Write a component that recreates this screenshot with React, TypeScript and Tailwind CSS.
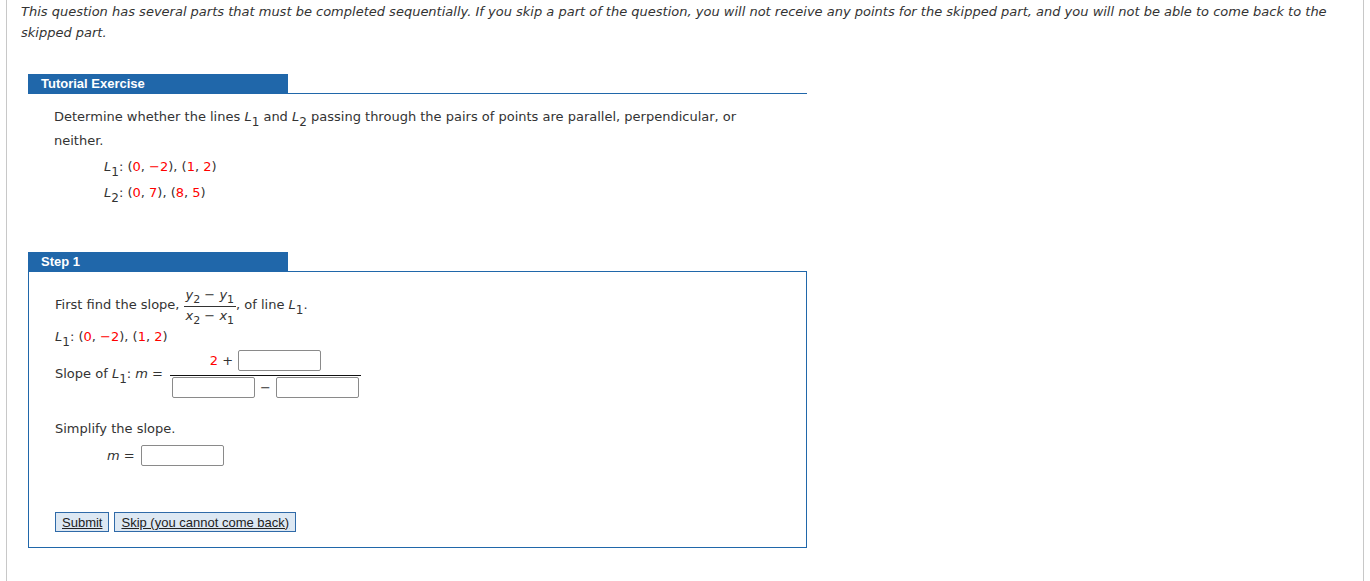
const RED = 'text-[#ff0000]';

function Sub({ children }: { children: React.ReactNode }) {
  return <span className="relative top-[5px] text-[12px]">{children}</span>;
}

function FSub({ children }: { children: React.ReactNode }) {
  return <span className="relative top-[4px] text-[11px]">{children}</span>;
}

function L({ n }: { n: number }) {
  return (
    <span>
      <i>L</i>
      <Sub>{n}</Sub>
    </span>
  );
}

function Box() {
  return <span className="inline-block h-[21px] w-[83px] rounded-[2px] border border-[#8a8a8a] bg-white" />;
}

function Pair({ a, b, c, d }: { a: string; b: string; c: string; d: string }) {
  return (
    <>
      (<span className={RED}>{a}</span>, <span className={RED}>{b}</span>), (
      <span className={RED}>{c}</span>, <span className={RED}>{d}</span>)
    </>
  );
}

function Header({ title }: { title: string }) {
  return (
    <div className="flex items-end">
      <div className="flex h-[20px] w-[260px] items-center bg-[#2067aa] pl-[13px] font-['Liberation_Sans',Arial,sans-serif] text-[13px] font-bold text-white">
        {title}
      </div>
      <div className="flex-1 border-b border-[#2067aa]" />
    </div>
  );
}

export default function App() {
  return (
    <div className="min-h-[581px] bg-white font-['DejaVu_Sans',Verdana,sans-serif] text-[13px] text-[#333]">
      <div className="mx-[6px] min-h-[581px] border-x border-[#c8c8c8] pl-[14px] pr-[16px] pt-[1px]">
        <p className="leading-[21px] italic">
          This question has several parts that must be completed sequentially. If you skip a part of the question, you will not receive any points for the skipped part, and you will not be able to come back to the skipped part.
        </p>

        <div className="ml-[7px] mt-[31px] w-[779px]">
          <Header title="Tutorial Exercise" />
          <div className="pl-[26px] pt-[11px]">
            <p className="w-[700px] leading-[24px]">
              Determine whether the lines <L n={1} /> and <L n={2} /> passing through the pairs of points are parallel, perpendicular, or neither.
            </p>
            <div className="mt-[1px] pl-[50px] leading-[25px]">
              <div>
                <L n={1} />: <Pair a="0" b="−2" c="1" d="2" />
              </div>
              <div>
                <L n={2} />: <Pair a="0" b="7" c="8" d="5" />
              </div>
            </div>
          </div>

          <div className="mt-[46px]">
            <Header title="Step 1" />
            <div className="h-[276px] border border-t-0 border-[#2067aa] pl-[26px] pt-[14px]">
              <div className="flex items-center">
                <span className="pb-[2px]">First find the slope,</span>
                <span className="ml-[4px] inline-flex flex-col items-center">
                  <span className="border-b border-[#333] px-[2px] pb-[2px] leading-[17px]">
                    <i>y</i>
                    <FSub>2</FSub> − <i>y</i>
                    <FSub>1</FSub>
                  </span>
                  <span className="px-[2px] leading-[17px]">
                    <i>x</i>
                    <FSub>2</FSub> − <i>x</i>
                    <FSub>1</FSub>
                  </span>
                </span>
                <span className="pb-[2px]">
                  , of line <L n={1} />.
                </span>
              </div>
              <div className="mt-[3px] leading-[18px]">
                <L n={1} />: <Pair a="0" b="−2" c="1" d="2" />
              </div>
              <div className="mt-[4px] flex items-center">
                <span>
                  Slope of <L n={1} />: <i>m</i> =
                </span>
                <span className="ml-[7px] inline-flex flex-col">
                  <span className="flex items-center justify-center gap-[5px] border-b border-[#111] pb-[4px]">
                    <span>
                      <span className={RED}>2</span> +
                    </span>
                    <Box />
                  </span>
                  <span className="flex items-center gap-[5px] px-[2px] pt-px">
                    <Box />
                    <span>−</span>
                    <Box />
                  </span>
                </span>
              </div>
              <div className="mt-[21px] leading-[20px]">Simplify the slope.</div>
              <div className="mt-[6px] flex items-center pl-[52px]">
                <span>
                  <i>m</i> =
                </span>
                <span className="ml-[6px] flex">
                  <Box />
                </span>
              </div>
              <div className="mt-[46px] flex gap-[5px] font-['Liberation_Sans',Arial,sans-serif] text-[13px] text-[#222]">
                <button className="h-[20px] border border-[#2f6aa8] bg-[#dde8f3] px-[6px] leading-[17px] underline">
                  Submit
                </button>
                <button className="h-[20px] border border-[#2f6aa8] bg-[#dde8f3] px-[6px] leading-[17px] underline">
                  Skip (you cannot come back)
                </button>
              </div>
            </div>
          </div>
        </div>
      </div>
    </div>
  );
}
